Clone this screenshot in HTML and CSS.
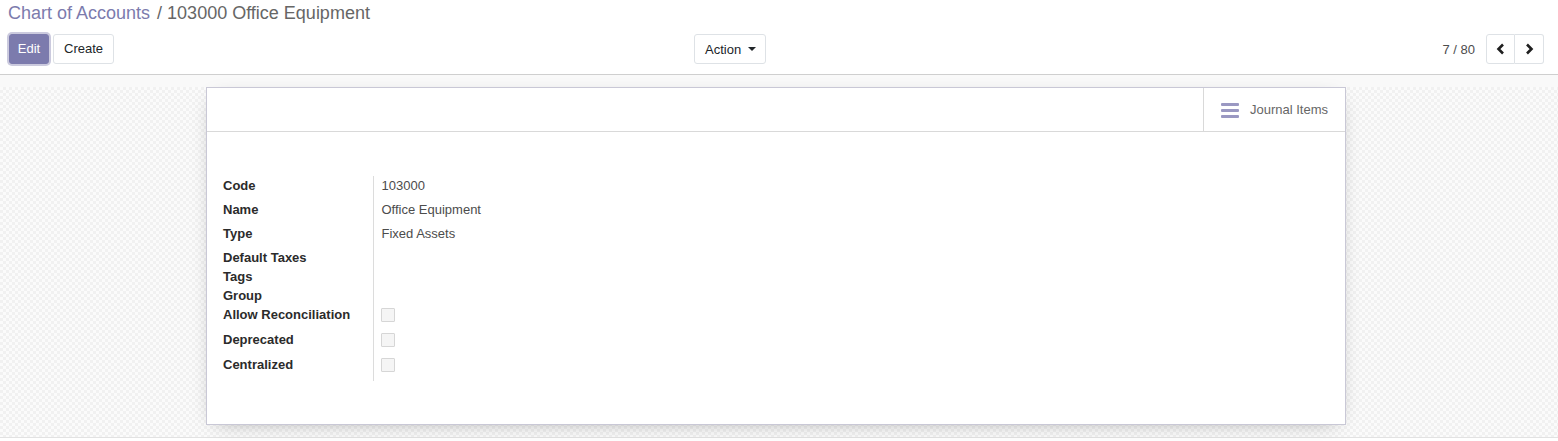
FILE: index.html
```html
<!DOCTYPE html>
<html>
<head>
<meta charset="utf-8">
<link rel="stylesheet" href="styles.css">
</head>
<body>
<div class="control-panel">
  <div class="breadcrumb"><a class="crumb-link">Chart of Accounts</a><span class="crumb-sep">/</span><span class="crumb-active">103000 Office Equipment</span></div>
  <div class="cp-bottom">
    <div class="cp-left">
      <button class="btn btn-primary">Edit</button>
      <button class="btn btn-secondary">Create</button>
    </div>
    <div class="cp-center">
      <button class="btn btn-secondary btn-action">Action <span class="caret"></span></button>
    </div>
    <div class="cp-right">
      <span class="pager-value">7 / 80</span>
      <div class="pager-buttons">
        <button class="btn btn-secondary pager-btn"><svg width="10" height="12" viewBox="0 0 10 12"><path d="M7 1.5 L2.5 6 L7 10.5" fill="none" stroke="#1f1f1f" stroke-width="2.6"/></svg></button>
        <button class="btn btn-secondary pager-btn"><svg width="10" height="12" viewBox="0 0 10 12"><path d="M3 1.5 L7.5 6 L3 10.5" fill="none" stroke="#1f1f1f" stroke-width="2.6"/></svg></button>
      </div>
    </div>
  </div>
</div>
<div class="content">
  <div class="sheet-bg">
    <div class="sheet">
      <div class="button-box">
        <div class="stat-button">
          <span class="bars-icon"><i></i><i></i><i></i></span>
          <span class="stat-text">Journal Items</span>
        </div>
      </div>
      <div class="sheet-body">
        <table class="group">
          <tr class="row"><td class="label">Code</td><td class="value">103000</td></tr>
          <tr class="row"><td class="label">Name</td><td class="value">Office Equipment</td></tr>
          <tr class="row"><td class="label">Type</td><td class="value">Fixed Assets</td></tr>
          <tr class="row-empty"><td class="label">Default Taxes</td><td class="value"></td></tr>
          <tr class="row-empty"><td class="label">Tags</td><td class="value"></td></tr>
          <tr class="row-empty"><td class="label">Group</td><td class="value"></td></tr>
          <tr class="row-check"><td class="label">Allow Reconciliation</td><td class="value"><span class="checkbox"></span></td></tr>
          <tr class="row-check"><td class="label">Deprecated</td><td class="value"><span class="checkbox"></span></td></tr>
          <tr class="row-check"><td class="label">Centralized</td><td class="value"><span class="checkbox"></span></td></tr>
        </table>
      </div>
    </div>
  </div>
</div>
</body>
</html>
```

FILE: styles.css
```css
* { box-sizing: border-box; }
html, body { margin: 0; padding: 0; background: #fff; }
body {
  font-family: "Liberation Sans", Arial, sans-serif;
  font-size: 13px;
  color: #4c4c4c;
  height: 441px;
  overflow: hidden;
}

.control-panel {
  height: 75px;
  border-bottom: 1px solid #cfcfcf;
  padding: 0 14px 0 8px;
  background: #fff;
}
.breadcrumb {
  font-size: 18px;
  line-height: 26px;
  height: 26px;
  color: #666;
}
.crumb-link { color: #7c7bad; }
.crumb-sep { padding: 0 5px 0 7px; color: #666; }
.crumb-active { color: #666; }

.cp-bottom {
  margin-top: 8px;
  display: grid;
  grid-template-columns: 686px auto 1fr;
  align-items: center;
}
.cp-left { display: flex; gap: 4px; }
.cp-center { display: flex; }
.cp-right { display: flex; justify-content: flex-end; align-items: center; }

.btn {
  font-family: "Liberation Sans", Arial, sans-serif;
  font-size: 13px;
  height: 30px;
  padding: 0 10px;
  border-radius: 3px;
  border: 1px solid #dee2e6;
  background: #fff;
  color: #212529;
  cursor: pointer;
  line-height: 28px;
}
.btn-primary {
  background: #7c7bad;
  border-color: #7c7bad;
  color: #fff;
  margin-left: 1px;
  box-shadow: 0 0 0 2px rgba(124, 123, 173, 0.4);
  width: 40px;
  padding: 0;
}
.btn-secondary { color: #212529; }
.btn-action {
  width: 72px;
  padding: 1px 0 0 10px;
  text-align: left;
}
.caret {
  display: inline-block;
  width: 0; height: 0;
  border-left: 4px solid transparent;
  border-right: 4px solid transparent;
  border-top: 4px solid #212529;
  vertical-align: 3px;
  margin-left: 3px;
}
.pager-value { color: #4c4c4c; margin-right: 11px; }
.pager-buttons { display: flex; }
.pager-btn {
  width: 29px;
  padding: 0;
  display: flex;
  align-items: center;
  justify-content: center;
}
.pager-btn:first-child { border-radius: 3px 0 0 3px; }
.pager-btn:last-child { border-radius: 0 3px 3px 0; border-left: none; }

.content {
  height: 363px;
  background: #f9f9f9;
  border-bottom: 1px solid #e2e2e2;
  padding-top: 12px;
}
.sheet-bg {
  height: 350px;
  padding: 0 6px 0 0;
  background-color: #f9f9f9;
  background-image: repeating-conic-gradient(#f1f1f1 0 25%, #fbfbfb 0 50%);
  background-size: 6px 6px;
}
.sheet {
  width: 1140px;
  margin: 0 auto;
  height: 338px;
  background: #fff;
  border: 1px solid #c9c8d6;
  box-shadow: 0 5px 20px -10px rgba(0, 0, 0, 0.4);
}
.button-box {
  height: 44px;
  border-bottom: 1px solid #d9d9d9;
  display: flex;
  justify-content: flex-end;
}
.stat-button {
  width: 142px;
  height: 43px;
  border-left: 1px solid #d9d9d9;
  display: flex;
  align-items: center;
  padding-left: 17px;
}
.bars-icon {
  display: flex;
  flex-direction: column;
  gap: 3px;
  width: 18px;
  margin-right: 11px;
  margin-top: 1px;
}
.bars-icon i {
  display: block;
  height: 3px;
  background: #9a98c2;
  border-radius: 1px;
}
.stat-text { color: #666; }

.sheet-body { padding: 44px 16px 0 16px; }
.group { border-collapse: collapse; }
.group td { padding: 0; vertical-align: top; line-height: 19px; }
.label {
  width: 150px;
  font-weight: bold;
  color: #2b2b2b;
  border-right: 1px solid #dcdcdc;
  padding-right: 8px;
}
.value { padding-left: 8px !important; color: #4c4c4c; }
.row td { height: 24px; }
.row-empty td { height: 19px; }
.row-check td { height: 25px; }
.row-check .value { padding-top: 3px !important; }
.row-check:last-child td { height: 26px; }
.checkbox {
  display: block;
  width: 14px;
  height: 14px;
  margin-left: -1px;
  border: 1px solid #d6d6d6;
  background: #f5f5f5;
  border-radius: 1px;
}
```
